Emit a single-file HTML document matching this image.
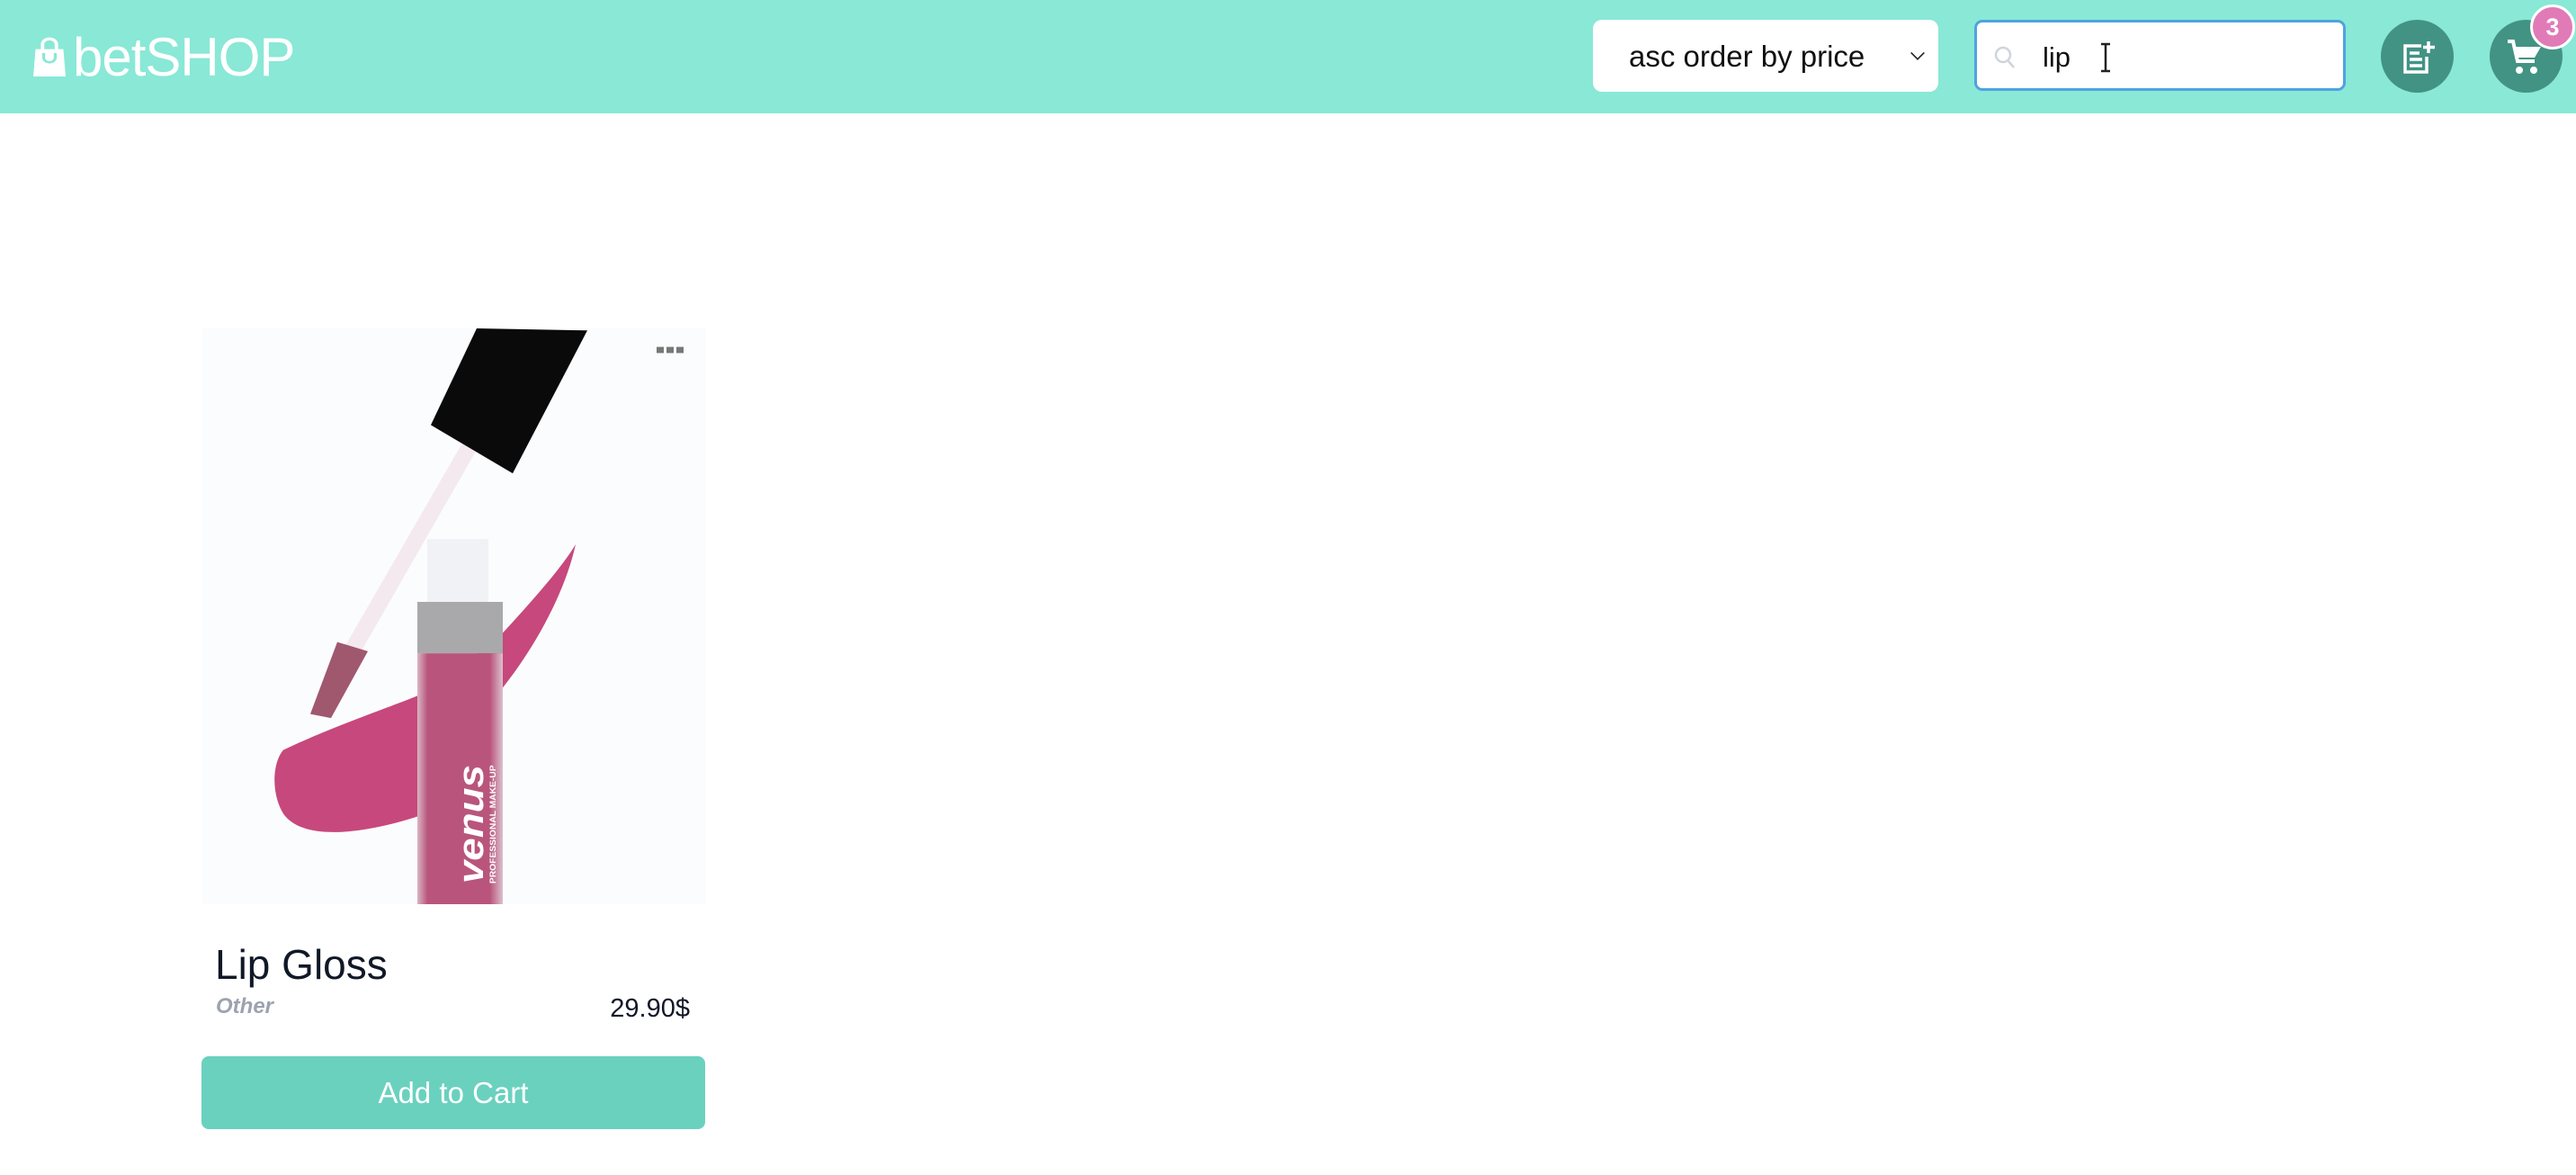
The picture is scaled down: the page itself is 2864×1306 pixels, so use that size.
<!DOCTYPE html>
<html><head><meta charset="utf-8"><style>
*{margin:0;padding:0;box-sizing:border-box}
body{width:2864px;height:1306px;background:#fff;font-family:"Liberation Sans",sans-serif;position:relative;overflow:hidden}
.hdr{position:absolute;left:0;top:0;width:2864px;height:126px;background:#89e8d6}
.logo{position:absolute;left:81px;top:29px;font-size:60px;color:#fff;letter-spacing:-1px}
.sel{position:absolute;left:1771px;top:22px;width:384px;height:80px;background:#fff;border-radius:10px;font-size:33px;color:#111;padding:22px 0 0 40px}
.sel .ch{position:absolute;right:16px;top:30px;width:14px;height:14px;border-right:2.5px solid #222;border-bottom:2.5px solid #222;transform:rotate(45deg) scale(.8)}
.srch{position:absolute;left:2195px;top:22px;width:413px;height:79px;background:#fff;border:3px solid #4fa3e0;border-radius:9px}
.srch .t{position:absolute;left:73px;top:21px;font-size:31px;color:#111}
.c{position:absolute;top:22px;width:81px;height:81px;border-radius:50%;background:#429384}
.badge{position:absolute;left:2813px;top:5px;width:50px;height:50px;border-radius:50%;background:#e07bb8;border:3px solid #fff;color:#fff;font-weight:bold;font-size:27px;text-align:center;line-height:44px}
.img{position:absolute;left:225px;top:365px;width:560px;height:640px;background:#fbfcfe}
.title{position:absolute;left:239px;top:1045px;font-size:46px;color:#111827}
.cat{position:absolute;left:240px;top:1105px;font-size:24px;color:#9ca3af;font-style:italic;font-weight:bold}
.price{position:absolute;right:2097px;top:1105px;font-size:29px;color:#111827}
.btn{position:absolute;left:224px;top:1174px;width:560px;height:81px;background:#6ad1bf;border-radius:8px;color:#fff;font-size:33px;text-align:center;line-height:81px}
</style></head><body>
<div class="hdr">
<svg style="position:absolute;left:37px;top:40px" width="36" height="46" viewBox="0 0 28 44" preserveAspectRatio="none"><path d="M8 14 V9 a6 6 0 0 1 12 0 V14" fill="none" stroke="#fff" stroke-width="3"/><path d="M2 14 H26 L28 43 H0 Z" fill="#fff"/><path d="M9 18 V23 a5 5 0 0 0 10 0 V18" fill="none" stroke="#89e8d6" stroke-width="2.5"/></svg>
<div class="logo">betSHOP</div>
<div class="sel">asc order by price<span class="ch"></span></div>
<div class="srch"><svg style="position:absolute;left:18px;top:25px" width="26" height="28" viewBox="0 0 26 28"><circle cx="11" cy="11" r="8" fill="none" stroke="#cfd4da" stroke-width="2.5"/><path d="M17 18 L23 25" stroke="#cfd4da" stroke-width="2.5"/></svg><span class="t">lip</span>
<svg style="position:absolute;left:135px;top:22px" width="16" height="34" viewBox="0 0 16 34"><path d="M3 2 H13 M8 2 V32 M3 32 H13" stroke="#222" stroke-width="2.5" fill="none"/></svg></div>
<div class="c" style="left:2647px"><svg style="position:absolute;left:23px;top:24px" width="38" height="36" viewBox="0 0 38 36"><path d="M22 5 H4 V34 H28 V17" fill="none" stroke="#fff" stroke-width="3.5"/><path d="M9 13 H20 M9 20 H23 M9 27 H23" stroke="#fff" stroke-width="3.5"/><path d="M30 0 V13 M24 6.5 H37" stroke="#fff" stroke-width="3.5"/></svg></div>
<div class="c" style="left:2768px"><svg style="position:absolute;left:19px;top:21px" width="40" height="42" viewBox="0 0 40 42"><path d="M1 3 H7 L12 25 H31" fill="none" stroke="#fff" stroke-width="4"/><path d="M8 9 H38 L31 21 H11 Z" fill="#fff"/><circle cx="14" cy="35" r="4" fill="#fff"/><circle cx="30" cy="35" r="4" fill="#fff"/></svg></div>
<div class="badge">3</div>
</div>
<div class="img"><svg width="560" height="640" viewBox="0 0 560 560" preserveAspectRatio="none">
<defs><linearGradient id="tb" x1="0" x2="1"><stop offset="0" stop-color="#d9b5c4"/><stop offset=".12" stop-color="#b9557c"/><stop offset=".85" stop-color="#b9557c"/><stop offset="1" stop-color="#dcc0cc"/></linearGradient></defs>
<path d="M90 410 C150 385 220 365 245 355 L330 300 C370 262 400 232 415 210 C402 262 362 322 322 362 L255 470 C185 492 112 500 90 472 C76 452 78 422 90 410 Z" fill="#c7487c"/>
<path d="M290 110 L305 118 L174 318 L158 310 Z" fill="#f3e9ee"/>
<path d="M150 305 L184 314 L143 379 L120 375 Z" fill="#a0586f"/>
<path d="M305 0 L428 2 L345 141 L254 94 Z" fill="#0a0a0a"/>
<rect x="250" y="205" width="68" height="62" fill="#f0f2f6"/>
<rect x="239" y="266" width="95" height="50" fill="#a9a9ab"/>
<rect x="239" y="316" width="95" height="244" fill="url(#tb)"/>
<text transform="translate(312,540) rotate(-90)" font-family="Liberation Sans,sans-serif" font-weight="bold" font-style="italic" font-size="40" fill="#fff">venus</text>
<text transform="translate(326,540) rotate(-90)" font-family="Liberation Sans,sans-serif" font-weight="bold" font-size="9" fill="#fff">PROFESSIONAL MAKE-UP</text>
<rect x="505" y="18" width="8" height="6" fill="#777"/><rect x="516" y="18" width="8" height="6" fill="#777"/><rect x="527" y="18" width="8" height="6" fill="#777"/>
</svg></div>
<div class="title">Lip Gloss</div>
<div class="cat">Other</div>
<div class="price">29.90$</div>
<div class="btn">Add to Cart</div>
</body></html>
